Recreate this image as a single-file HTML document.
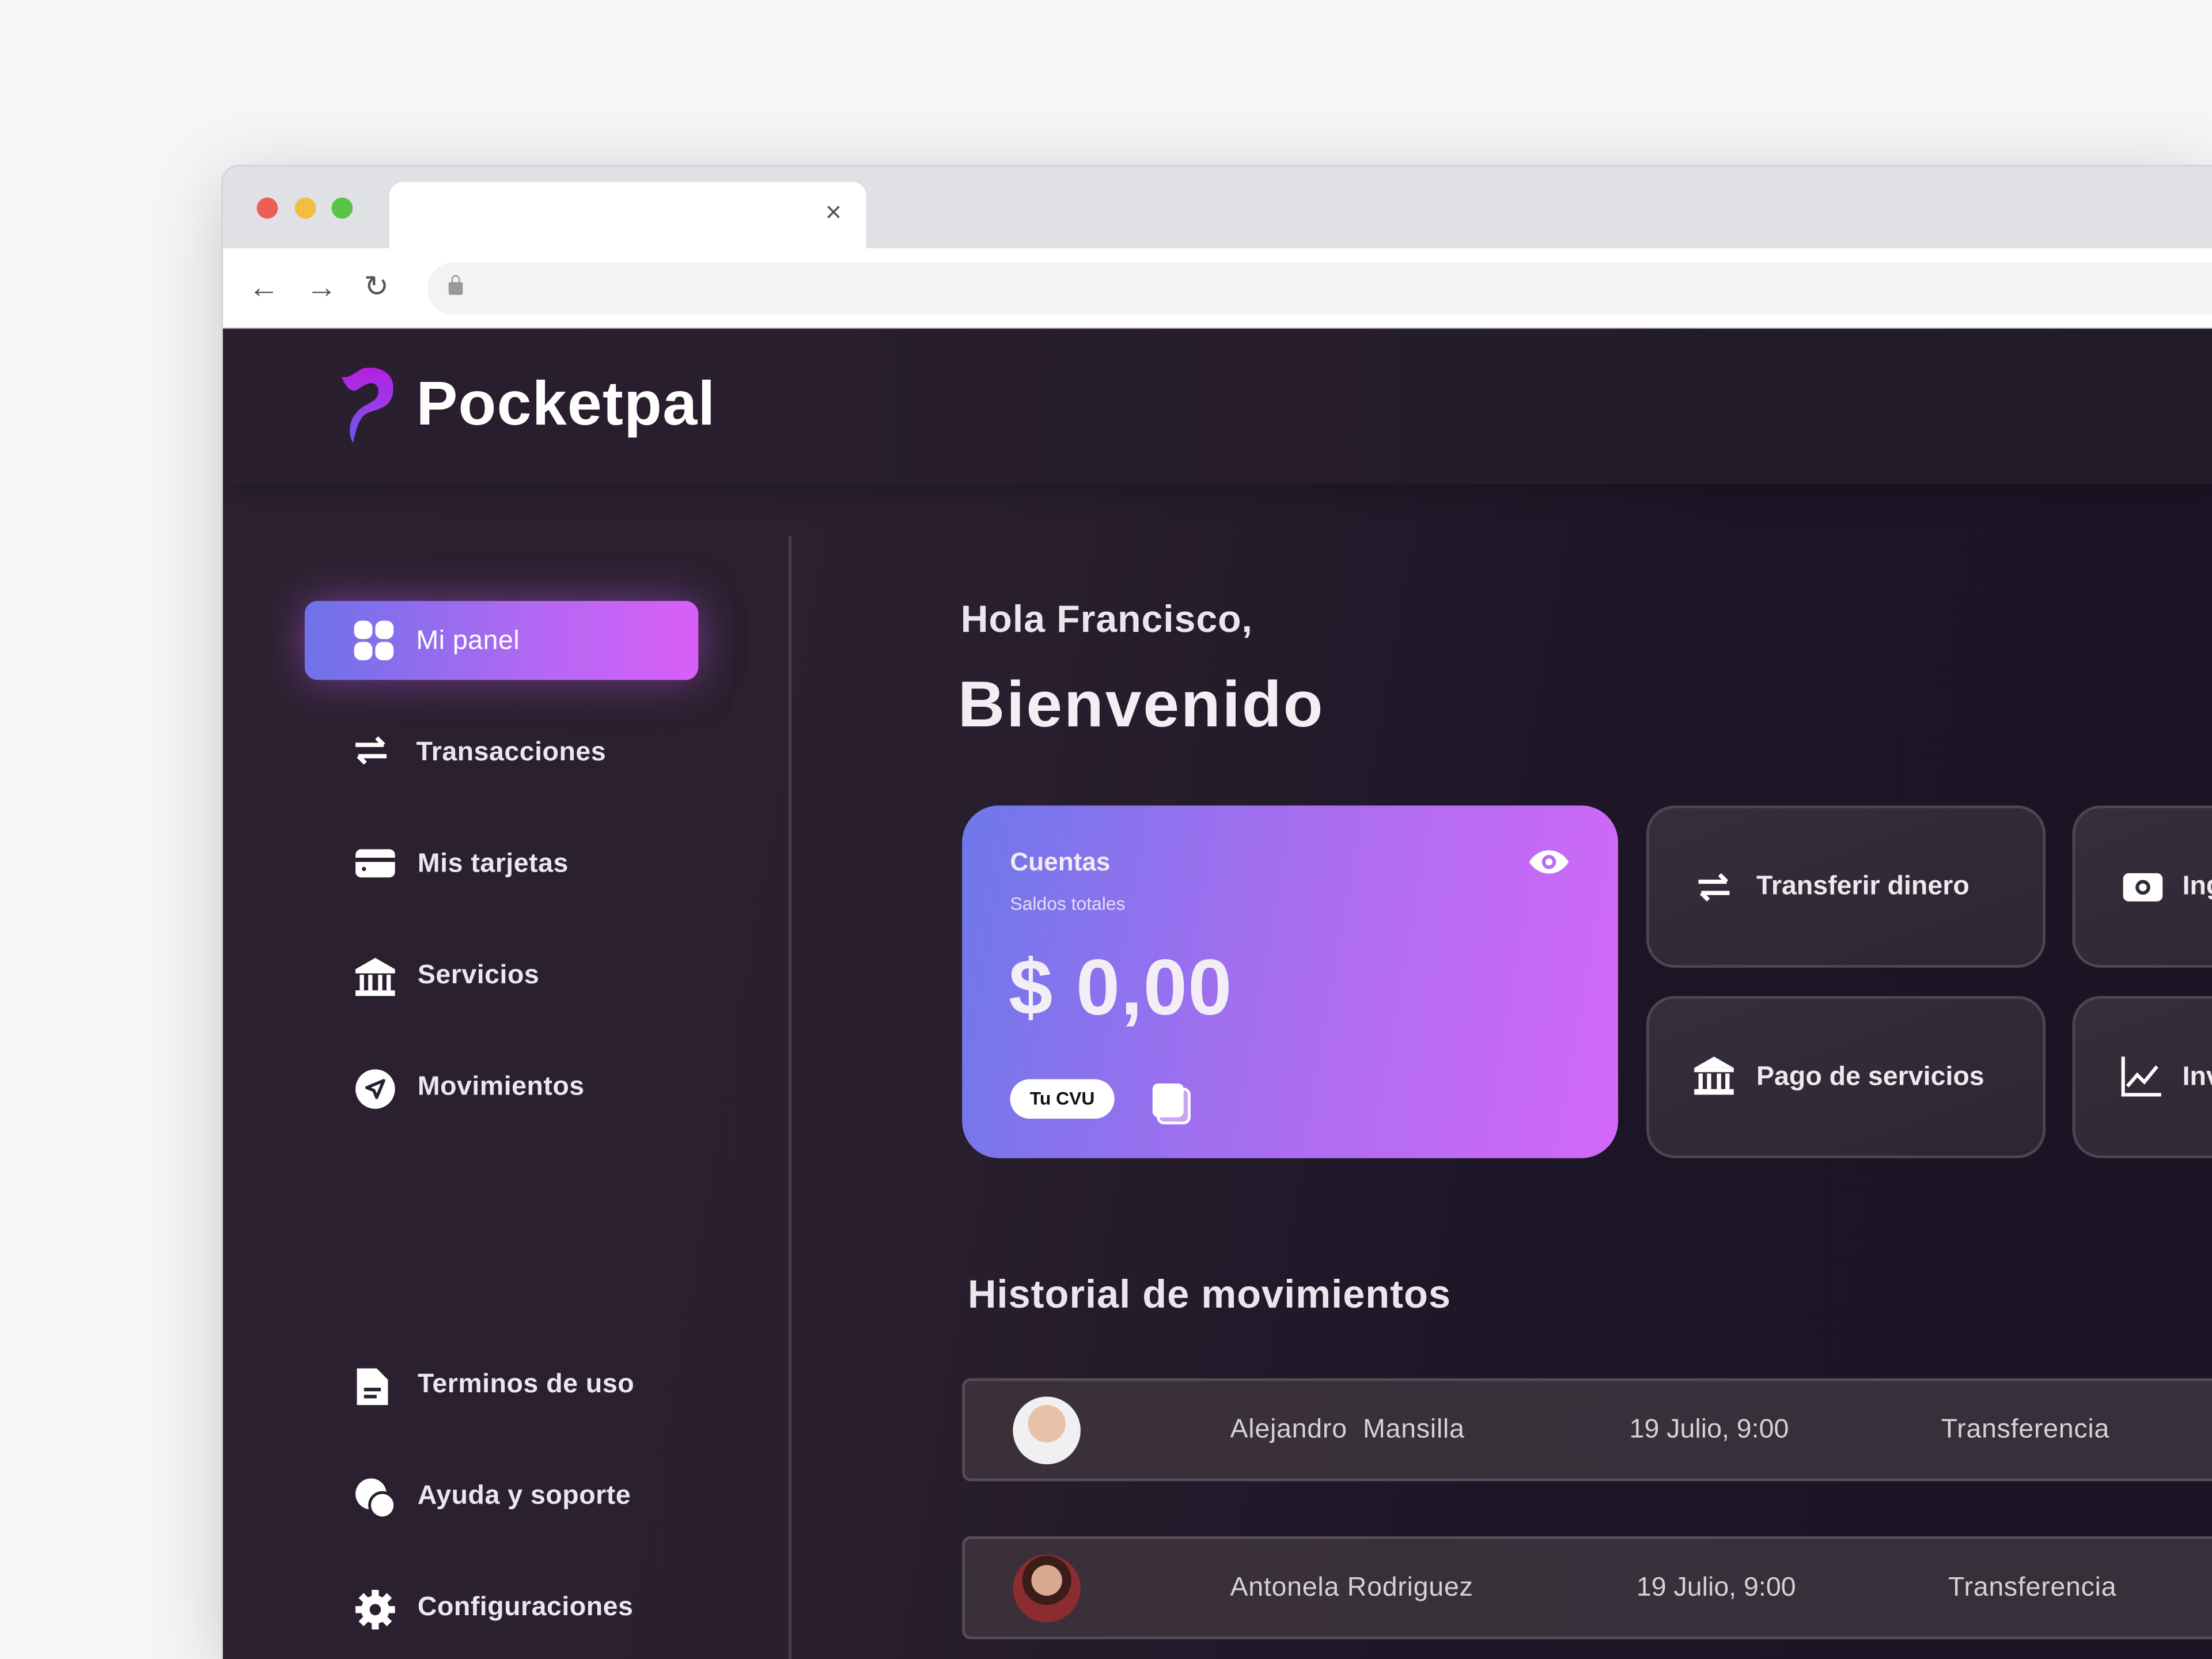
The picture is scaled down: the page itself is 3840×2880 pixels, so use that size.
<!DOCTYPE html>
<html><head><meta charset="utf-8"><style>
*{margin:0;padding:0;box-sizing:border-box}
html,body{width:3840px;height:2880px;overflow:hidden;background:#f5f6f7}
#s{position:absolute;left:0;top:0;width:1568px;height:1176px;overflow:hidden;transform:scale(2.44898);transform-origin:0 0;font-family:"Liberation Sans",sans-serif}
.a{position:absolute}
.win{left:157px;top:117px;width:1411px;height:1059px;border-radius:12px 0 0 0;overflow:hidden;box-shadow:0 10px 60px rgba(0,0,0,.18);border:1px solid #cfd1d4;border-right:none;border-bottom:none}
.app{left:0;top:115px;width:1411px;height:944px;overflow:hidden;background:linear-gradient(100deg,#2c2130 0%,#2a1f2e 35%,#1b1526 70%,#1a1424 100%)}
.t{color:#f1ecf3;white-space:nowrap}
.nav{left:93px;color:#ece6ee;font-size:19px;font-weight:bold;letter-spacing:.2px}
.ic{position:absolute;left:-45px;top:-3px}
.btn{width:283px;height:115px;border-radius:20px;background:linear-gradient(160deg,#362e3b,#2d2532);border:2.5px solid #4d4552}
.btn .t{font-size:19px;font-weight:bold;color:#eee8ef}
.row{left:524px;width:1000px;height:73px;background:linear-gradient(90deg,#3a3039,#35303a);border:2.5px solid #564c57;border-radius:6px}
.row .t{font-size:19px;color:#d8d0d8;top:24px}
.av{left:34px;top:11px;width:48px;height:48px;border-radius:50%}
</style></head><body><div id="s">
<div class="a win">
 <div class="a" style="left:0;top:0;width:1411px;height:58px;background:#dfe1e5"></div>
 <div class="a" style="left:24px;top:22px;width:15px;height:15px;border-radius:50%;background:#ed5f56"></div>
 <div class="a" style="left:51px;top:22px;width:15px;height:15px;border-radius:50%;background:#f4bd3f"></div>
 <div class="a" style="left:77px;top:22px;width:15px;height:15px;border-radius:50%;background:#5ac545"></div>
 <div class="a" style="left:118px;top:11px;width:338px;height:50px;background:#fff;border-radius:10px 10px 0 0"></div>
 <div class="a" style="left:427px;top:22px;font-size:20px;color:#555">×</div>
 <div class="a" style="left:0;top:58px;width:1411px;height:57px;background:#fff;border-bottom:1px solid #d0d0d0"></div>
 <div class="a" style="left:18px;top:73px;font-size:22px;color:#555">←</div>
 <div class="a" style="left:59px;top:73px;font-size:22px;color:#555">→</div>
 <div class="a" style="left:100px;top:73px;font-size:21px;color:#555">↻</div>
 <div class="a" style="left:145px;top:68px;width:1300px;height:37px;background:#f1f3f4;border-radius:19px"></div>
 <div class="a" style="left:160px;top:82px;width:10px;height:9px;background:#999;border-radius:1px"></div>
 <div class="a" style="left:162px;top:77px;width:6px;height:7px;border:1.5px solid #999;border-bottom:none;border-radius:3px 3px 0 0"></div>

 <div class="a app">
  <div class="a" style="left:0;top:0;width:1411px;height:110px;background:linear-gradient(90deg,#2a1f2e,#221a29);box-shadow:0 6px 20px rgba(0,0,0,.2)"></div>
  <svg class="a" style="left:82px;top:26px" width="42" height="56" viewBox="0 0 42 56"><defs><linearGradient id="lg" x1="0" y1="0" x2="0" y2="1"><stop offset="0" stop-color="#b61fe0"/><stop offset=".5" stop-color="#9c3ae8"/><stop offset="1" stop-color="#5d5bf0"/></linearGradient></defs><path d="M2 8 C8 10 12 4 18 2 C30 0 42 6 38 22 C34 34 20 30 16 38 C12 44 12 50 10 55 C6 46 8 38 14 32 C20 26 30 26 28 16 C24 8 16 16 12 18 C6 18 4 12 2 8Z" fill="url(#lg)"/></svg>
  <div class="a t" style="left:137px;top:29px;font-size:44px;font-weight:bold;color:#fff;letter-spacing:.5px">Pocketpal</div>
  <div class="a" style="left:401px;top:147px;width:1.5px;height:860px;background:#4a3f50"></div>

  <div class="a" style="left:58px;top:193px;width:279px;height:56px;border-radius:9px;background:linear-gradient(90deg,#6d72e8,#b468f3 60%,#d95ef8);box-shadow:0 0 30px rgba(190,90,240,.5)"></div>
  <div class="a nav" style="top:211px;left:137px;color:#fff;font-weight:normal">Mi panel<svg class="ic" width="30" height="30" style="left:-45px;top:-5px" viewBox="0 0 30 30"><rect x="1" y="1" width="13" height="13" rx="5" fill="#fff"/><rect x="16" y="1" width="13" height="13" rx="5" fill="#fff"/><rect x="1" y="16" width="13" height="13" rx="5" fill="#fff"/><rect x="16" y="16" width="13" height="13" rx="5" fill="#fff"/></svg></div>
  <div class="a nav" style="top:290px;left:137px">Transacciones<svg class="ic" width="26" height="26" viewBox="0 0 26 26"><path d="M2 8h20M17 3l5 5M24 16H4M9 21l-5-5" stroke="#fff" stroke-width="3" fill="none"/></svg></div>
  <div class="a nav" style="top:369px;left:138px">Mis tarjetas<svg class="ic" width="30" height="26" viewBox="0 0 30 26"><rect x="1" y="3" width="28" height="20" rx="4" fill="#fff"/><rect x="1" y="9" width="28" height="3" fill="#2a1f2e"/><circle cx="7" cy="17" r="1.5" fill="#2a1f2e"/></svg></div>
  <div class="a nav" style="top:448px;left:138px">Servicios<svg class="ic" width="30" height="30" viewBox="0 0 30 30"><path d="M15 1 L29 9 H1Z" fill="#fff"/><rect x="1" y="9" width="28" height="3" fill="#fff"/><rect x="4" y="13" width="3" height="11" fill="#fff"/><rect x="10" y="13" width="3" height="11" fill="#fff"/><rect x="17" y="13" width="3" height="11" fill="#fff"/><rect x="23" y="13" width="3" height="11" fill="#fff"/><rect x="1" y="24" width="28" height="4" fill="#fff"/></svg></div>
  <div class="a nav" style="top:527px;left:138px">Movimientos<svg class="ic" width="30" height="30" viewBox="0 0 30 30"><circle cx="15" cy="15" r="14" fill="#fff"/><path d="M21 9 L9 14 L14 16 L16 21Z" fill="none" stroke="#2a1f2e" stroke-width="2.2" stroke-linejoin="round"/></svg></div>
  <div class="a nav" style="top:738px;left:138px">Terminos de uso<svg class="ic" width="26" height="30" viewBox="0 0 26 30"><path d="M2 2h14l8 8v18H2Z" fill="#fff"/><path d="M7 17h12M7 22h9" stroke="#2a1f2e" stroke-width="2.5"/></svg></div>
  <div class="a nav" style="top:817px;left:138px">Ayuda y soporte<svg class="ic" width="30" height="30" viewBox="0 0 30 30"><circle cx="12" cy="12" r="11" fill="#fff"/><circle cx="20" cy="20" r="9" fill="#fff" stroke="#2a1f2e" stroke-width="2"/></svg></div>
  <div class="a nav" style="top:896px;left:138px">Configuraciones<svg class="ic" width="30" height="30" viewBox="0 0 30 30"><circle cx="15" cy="15" r="10" fill="#fff"/><g stroke="#fff" stroke-width="5"><path d="M15 1v28M1 15h28M5 5l20 20M25 5L5 25"/></g><circle cx="15" cy="15" r="4" fill="#2a1f2e"/></svg></div>

  <div class="a t" style="left:523px;top:191px;font-size:27px;font-weight:bold;color:#ebe5ec;letter-spacing:.4px">Hola Francisco,</div>
  <div class="a t" style="left:521px;top:239px;font-size:46px;font-weight:bold;color:#f3eef4;letter-spacing:1.2px">Bienvenido</div>

  <div class="a" style="left:524px;top:338px;width:465px;height:250px;border-radius:26px;background:linear-gradient(100deg,#6e78ea,#a46ef0 45%,#d368f8)"></div>
  <div class="a t" style="left:558px;top:368px;font-size:18px;font-weight:bold">Cuentas</div>
  <div class="a t" style="left:558px;top:400px;font-size:13px;color:#e4dcf4">Saldos totales</div>
  <div class="a t" style="left:557px;top:434px;font-size:56px;font-weight:bold;color:#f3eef6;letter-spacing:.5px">$ 0,00</div>
  <div class="a" style="left:558px;top:532px;width:74px;height:28px;border-radius:14px;background:#fff;color:#111;font-size:13px;font-weight:bold;text-align:center;line-height:28px">Tu CVU</div>
  <div class="a" style="left:659px;top:535px;width:22px;height:24px;border-radius:4px;background:#fff;box-shadow:4px 4px 0 -1px #c9a6f3,4px 4px 0 1px #fff"></div>
  <svg class="a" style="left:925px;top:367px" width="30" height="22" viewBox="0 0 30 22"><path d="M1 11 C8 0 22 0 29 11 C22 22 8 22 1 11Z" fill="#fff"/><circle cx="15" cy="11" r="5" fill="#b96cf4"/><circle cx="15" cy="11" r="2.5" fill="#fff"/></svg>

  <div class="a btn" style="left:1009px;top:338px"><svg class="a" style="left:33px;top:44px" width="26" height="26" viewBox="0 0 26 26"><path d="M2 8h20M17 3l5 5M24 16H4M9 21l-5-5" stroke="#fff" stroke-width="3" fill="none"/></svg><div class="a t" style="left:76px;top:45px">Transferir dinero</div></div>
  <div class="a btn" style="left:1311px;top:338px"><svg class="a" style="left:33px;top:45px" width="30" height="22" viewBox="0 0 30 22"><rect x="1" y="1" width="28" height="20" rx="4" fill="#fff"/><circle cx="15" cy="11" r="4" fill="none" stroke="#332b38" stroke-width="2.5"/></svg><div class="a t" style="left:76px;top:45px">Ingresar</div></div>
  <div class="a btn" style="left:1009px;top:473px"><svg class="a" style="left:31px;top:40px" width="30" height="30" viewBox="0 0 30 30"><path d="M15 1 L29 9 H1Z" fill="#fff"/><rect x="1" y="9" width="28" height="3" fill="#fff"/><rect x="4" y="13" width="3" height="11" fill="#fff"/><rect x="10" y="13" width="3" height="11" fill="#fff"/><rect x="17" y="13" width="3" height="11" fill="#fff"/><rect x="23" y="13" width="3" height="11" fill="#fff"/><rect x="1" y="24" width="28" height="4" fill="#fff"/></svg><div class="a t" style="left:76px;top:45px">Pago de servicios</div></div>
  <div class="a btn" style="left:1311px;top:473px"><svg class="a" style="left:32px;top:40px" width="30" height="30" viewBox="0 0 30 30"><path d="M2 1v27h27M5 22l7-8 5 5 9-11" stroke="#fff" stroke-width="2.5" fill="none"/></svg><div class="a t" style="left:76px;top:45px">Inversiones</div></div>

  <div class="a t" style="left:528px;top:669px;font-size:28px;font-weight:bold;color:#ebe5ec;letter-spacing:.4px">Historial de movimientos</div>

  <div class="a row" style="top:744px"><div class="a av" style="background:radial-gradient(circle at 50% 40%,#e8c2a8 0 35%,#f0f0f0 36%)"></div><div class="a t" style="left:188px;letter-spacing:.3px">Alejandro&nbsp; Mansilla</div><div class="a t" style="left:471px">19 Julio, 9:00</div><div class="a t" style="left:692px;letter-spacing:.3px">Transferencia</div></div>
  <div class="a row" style="top:856px"><div class="a av" style="background:radial-gradient(circle at 50% 38%,#d9a891 0 28%,#3a1d18 29% 45%,#8a2c30 46%)"></div><div class="a t" style="left:188px;letter-spacing:.3px">Antonela Rodriguez</div><div class="a t" style="left:476px">19 Julio, 9:00</div><div class="a t" style="left:697px;letter-spacing:.3px">Transferencia</div></div>
 </div>
</div>
</div></body></html>
